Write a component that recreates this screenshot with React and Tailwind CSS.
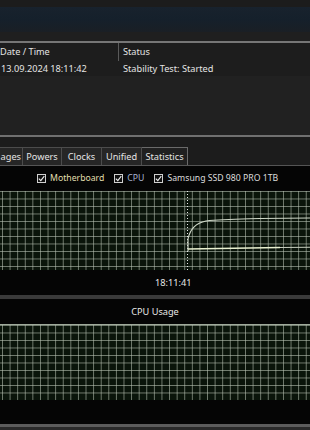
import React from "react";

const font = { fontFamily: '"Noto Sans", "Open Sans", sans-serif' };

function Check({ label, color }) {
  return (
    <div className="flex items-center gap-[4px]">
      <div className="w-[9px] h-[9px] border border-[#d0d0d0] bg-[#111] flex items-center justify-center">
        <svg width="7" height="7" viewBox="0 0 7 7">
          <path d="M0.8 3.6 L2.8 5.6 L6.3 1.2" stroke="#f0f0f0" strokeWidth="1.1" fill="none" />
        </svg>
      </div>
      <span className={color}>{label}</span>
    </div>
  );
}

const grid =
  "[background-image:linear-gradient(to_right,rgba(185,195,180,0.6)_1px,transparent_1px),linear-gradient(to_bottom,rgba(185,195,180,0.6)_1px,transparent_1px)] [background-size:7.6px_7.5px] [background-position:2px_0px] bg-[#0a140a]";

export default function App() {
  return (
    <div className="w-[310px] h-[430px] overflow-hidden bg-[#050505] text-[9.2px] text-[#e4e4e4] flex flex-col" style={font}>
      {/* top */}
      <div className="h-[7px] bg-[#1c1c1c]" />
      <div className="h-[25px] bg-[linear-gradient(to_bottom,#18222d,#15202b,#1a1f25)]" />
      <div className="h-[9px] bg-[#1f1f1f]" />
      <div className="h-[2px] bg-[#767676]" />
      {/* table */}
      <div className="bg-[#1d1d1d] flex flex-col">
        <div className="flex h-[18px] items-center">
          <div className="w-[119px] h-full flex items-center border-r border-[#5a5a5a]">Date / Time</div>
          <div className="pl-[4px]">Status</div>
        </div>
        <div className="flex h-[15px] items-center">
          <div className="w-[120px] pl-[1px]">13.09.2024 18:11:42</div>
          <div className="pl-[3px]">Stability Test: Started</div>
        </div>
      </div>
      <div className="h-[59px] bg-[#212121]" />
      <div className="h-[2px] bg-[#707070]" />
      <div className="h-[10px] bg-[#1c1c1c]" />
      {/* tabs */}
      <div className="flex h-[19px] bg-[#1c1c1c] border-b border-[#555]">
        <div className="w-[23px] border-r border-t border-[#4c4c4c] bg-[#262626] flex items-center justify-end pr-[1px]">ages</div>
        <div className="w-[39px] border-r border-t border-[#4c4c4c] bg-[#262626] flex items-center justify-center">Powers</div>
        <div className="w-[40px] border-r border-t border-[#4c4c4c] bg-[#262626] flex items-center justify-center">Clocks</div>
        <div className="w-[40px] border-r border-t border-[#4c4c4c] bg-[#262626] flex items-center justify-center">Unified</div>
        <div className="w-[46px] border-r border-t border-[#6a6a6a] bg-[#202020] flex items-center justify-center">Statistics</div>
      </div>
      {/* checkbox row */}
      <div className="h-[25px] flex items-center pl-[37px] gap-[10px] text-[8.7px]">
        <Check label="Motherboard" color="text-[#e2dfae]" />
        <Check label="CPU" color="text-[#a9b3cf]" />
        <Check label="Samsung SSD 980 PRO 1TB" color="text-[#dcdcdc]" />
      </div>
      {/* graph 1 */}
      <div className={"relative h-[79px] " + grid}>
        <svg className="absolute inset-0" width="310" height="79" viewBox="0 0 310 79">
          <line x1="187.5" y1="0" x2="187.5" y2="79" stroke="#e8e8e8" strokeWidth="1" strokeDasharray="1 2" />
          <path d="M188 60 L188 48 C190 38 196 32 206 30 C222 28 240 28 260 27.5 L310 27" stroke="#cfd8c8" strokeWidth="1.2" fill="none" />
          <path d="M188 58 L280 56.5" stroke="#e8f0d0" strokeWidth="1.4" fill="none" />
          <path d="M280 56.5 L310 56.3" stroke="#c8d0c0" strokeWidth="1.1" fill="none" />
        </svg>
      </div>
      <div className="h-[25px] flex items-center pl-[155px] text-[#e8e8e8]">18:11:41</div>
      <div className="h-[4px] bg-[#3a3a3a]" />
      <div className="h-[25px] flex items-center justify-center text-[#e8e8e8]">CPU Usage</div>
      <div className="h-[1px] bg-[#a0ab9c]" />
      <div className={"h-[75px] " + grid} />
      <div className="h-[24px]" />
      <div className="h-[3px] bg-[#5c5c5c]" />
      <div className="flex-1 bg-[#2a2a2a]" />
    </div>
  );
}
